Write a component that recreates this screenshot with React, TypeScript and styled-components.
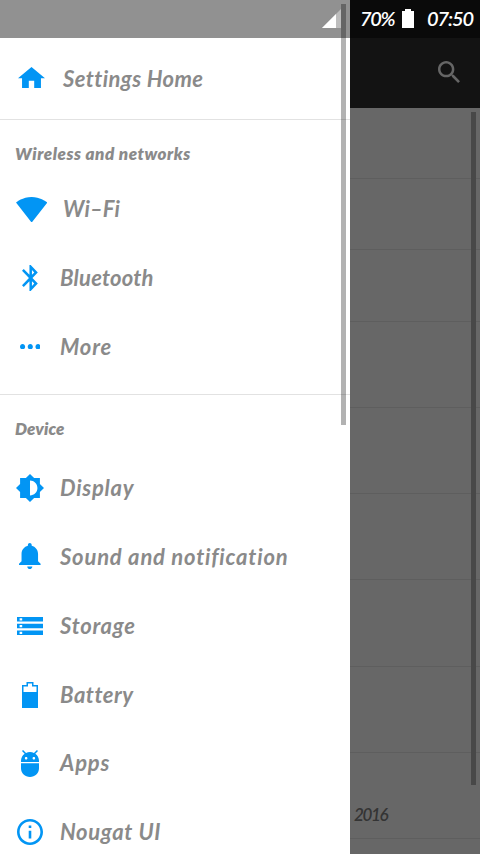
import React from 'react';
import styled, { createGlobalStyle } from 'styled-components';

const GlobalStyle = createGlobalStyle`
  * { box-sizing: border-box; }
  body { margin: 0; background: #676767; font-family: Lato, "Open Sans", sans-serif; font-style: italic; }
`;

const Screen = styled.div`
  position: relative;
  width: 480px;
  height: 854px;
  overflow: hidden;
  background: #676767;
`;

const Page = styled.div`
  display: flex;
  flex-direction: column;
  height: 100%;
`;

const StatusBar = styled.header`
  display: flex;
  align-items: center;
  justify-content: flex-end;
  flex: none;
  height: 38px;
  padding: 0 6px 2px 0;
  background: #0a0a0a;
`;

const StatusText = styled.span<{ $width: number; $spacing: number }>`
  width: ${(p) => p.$width}px;
  color: #fff;
  font-size: 20px;
  font-weight: 600;
  line-height: 36px;
  letter-spacing: ${(p) => p.$spacing}px;
  white-space: nowrap;
`;

const BatteryLevel = styled.svg`
  margin: 0 13px 0 6px;
`;

const Toolbar = styled.div`
  display: flex;
  flex: none;
  align-items: center;
  justify-content: flex-end;
  height: 70px;
  padding: 0 20px 2px 0;
  background: #131313;
`;

const ListItem = styled.div<{ $height: number }>`
  display: flex;
  flex: none;
  align-items: center;
  height: ${(p) => p.$height}px;
  padding: 38px 0 0 354px;
  border-bottom: 1px solid #5e5e5e;
  color: #343434;
  font-size: 17px;
  font-weight: 600;
  letter-spacing: -1.4px;
`;

const Drawer = styled.aside`
  position: absolute;
  top: 0;
  left: 0;
  display: flex;
  flex-direction: column;
  width: 350px;
  height: 854px;
  overflow: hidden;
  background: #fff;
`;

const DrawerStatus = styled.div`
  display: flex;
  flex: none;
  justify-content: flex-end;
  height: 38px;
  padding: 9px 9px 0 0;
  background: #919191;
`;

const Section = styled.section<{ $height?: number }>`
  flex: none;
  height: ${(p) => (p.$height ? `${p.$height}px` : 'auto')};
  border-bottom: 1px solid #e2e2e2;
`;

const Heading = styled.h2<{ $height: number; $spacing: number }>`
  height: ${(p) => p.$height}px;
  margin: 0;
  padding: 23px 0 0 15px;
  color: #8a8a8a;
  font-size: 17px;
  font-weight: 800;
  line-height: 22px;
  letter-spacing: ${(p) => p.$spacing}px;
`;

const Row = styled.div<{ $height?: number }>`
  display: flex;
  align-items: center;
  height: ${(p) => p.$height ?? 68.7}px;
`;

const IconSlot = styled.span<{ $width: number }>`
  display: flex;
  flex: none;
  align-items: center;
  justify-content: center;
  width: ${(p) => p.$width}px;
`;

const Glyph = styled.svg<{ $shift?: number }>`
  display: block;
  fill: #0295f4;
  transform: translateY(${(p) => p.$shift ?? 0}px);
`;

const Label = styled.span<{ $spacing: number }>`
  color: #8a8a8a;
  font-size: 22px;
  font-weight: 700;
  line-height: 28px;
  letter-spacing: ${(p) => p.$spacing}px;
  white-space: nowrap;
`;

const ScrollThumb = styled.i<{ $left: number; $top: number; $height: number; $color: string }>`
  position: absolute;
  top: ${(p) => p.$top}px;
  left: ${(p) => p.$left}px;
  width: 5px;
  height: ${(p) => p.$height}px;
  background: ${(p) => p.$color};
`;

type Icon = { w: number; h: number; box: string; d: string; shift?: number };

const icons: Record<string, Icon> = {
  home: { w: 27, h: 21.3, box: '2 3 20 17', d: 'M10 20v-6h4v6h5v-8h3L12 3 2 12h3v8z', shift: -1 },
  wifi: { w: 31.3, h: 25.6, box: '.36 3 23.28 18.5', d: 'M12.01 21.49L23.64 7c-.45-.34-4.93-4-11.64-4C5.28 3 .81 6.66.36 7l11.63 14.49.01.01.01-.01z' },
  bluetooth: { w: 15.8, h: 26, box: '5 2 12.71 20', d: 'M17.71 7.71L12 2h-1v7.59L6.41 5 5 6.41 10.59 12 5 17.59 6.41 19 11 14.41V22h1l5.71-5.71-4.3-4.29 4.3-4.29zM13 5.83l1.88 1.88L13 9.59V5.83zm1.88 10.46L13 18.17v-3.76l1.88 1.88z' },
  more: { w: 20.6, h: 5.4, box: '4 10 16 4', d: 'M6 10c-1.1 0-2 .9-2 2s.9 2 2 2 2-.9 2-2-.9-2-2-2zm12 0c-1.1 0-2 .9-2 2s.9 2 2 2 2-.9 2-2-.9-2-2-2zm-6 0c-1.1 0-2 .9-2 2s.9 2 2 2 2-.9 2-2-.9-2-2-2z' },
  display: { w: 28, h: 28, box: '.69 .69 22.62 22.62', d: 'M20 15.31L23.31 12 20 8.69V4h-4.69L12 .69 8.69 4H4v4.69L.69 12 4 15.31V20h4.69L12 23.31 15.31 20H20v-4.69zM12 18V6c3.31 0 6 2.69 6 6s-2.69 6-6 6z' },
  sound: { w: 21.6, h: 26, box: '3 2 17 20', shift: -1, d: 'M11.5 22c1.1 0 2-.9 2-2h-4c0 1.1.9 2 2 2zm6.5-6v-5.5c0-3.07-2.13-5.64-5-6.32V3.5c0-.83-.67-1.5-1.5-1.5S10 2.67 10 3.5v.68c-2.87.68-5 3.25-5 6.32V16l-2 2v1h17v-1l-2-2z' },
  storage: { w: 26, h: 18, box: '2 4 20 16', d: 'M2 20h20v-4H2v4zm2-3h2v2H4v-2zM2 4v4h20V4H2zm4 3H4V5h2v2zm-4 7h20v-4H2v4zm2-3h2v2H4v-2z' },
  battery: { w: 16, h: 26, box: '0 0 16 26', d: 'M0 3h4.5V0h7v3H16v23H0zM1.5 4.5V10h13V4.5H10v-3H6v3z' },
  apps: { w: 18, h: 27, box: '5 1.44 14 21.56', d: 'M5 16c0 3.87 3.13 7 7 7s7-3.13 7-7v-4H5v4zM16.12 4.37l2.1-2.1-.82-.83-2.3 2.31C14.16 3.28 13.12 3 12 3s-2.16.28-3.09.75L6.6 1.44l-.82.83 2.1 2.1C6.14 5.64 5 7.68 5 10v1h14v-1c0-2.32-1.14-4.36-2.88-5.63zM9 9c-.55 0-1-.45-1-1s.45-1 1-1 1 .45 1 1-.45 1-1 1zm6 0c-.55 0-1-.45-1-1s.45-1 1-1 1 .45 1 1-.45 1-1 1z' },
  info: { w: 26, h: 26, box: '2 2 20 20', d: 'M11 17h2v-6h-2v6zm1-15C6.48 2 2 6.48 2 12s4.48 10 10 10 10-4.48 10-10S17.52 2 12 2zm0 18c-4.41 0-8-3.59-8-8s3.59-8 8-8 8 3.59 8 8-3.59 8-8 8zM11 9h2V7h-2v2z' },
};

type ItemProps = { icon: string; text: string; spacing: number; slot?: number; height?: number };

function Item({ icon, text, spacing, slot = 60, height }: ItemProps) {
  const { w, h, box, d, shift } = icons[icon];
  return (
    <Row $height={height}>
      <IconSlot $width={slot}>
        <Glyph width={w} height={h} viewBox={box} preserveAspectRatio="none" $shift={shift}>
          <path d={d} fillRule="evenodd" />
        </Glyph>
      </IconSlot>
      <Label $spacing={spacing}>{text}</Label>
    </Row>
  );
}

const rowHeights = [71, 71, 72, 86, 86, 86, 87, 86];

export default function App() {
  return (
    <Screen>
      <GlobalStyle />
      <Page>
        <StatusBar>
          <StatusText $width={36} $spacing={-1.4}>70%</StatusText>
          <BatteryLevel width="12" height="19" viewBox="0 0 12 19" fill="#fff">
            <path d="M0 2h3V0h6v2h3v17H0z" />
          </BatteryLevel>
          <StatusText $width={47} $spacing={-1.1}>07:50</StatusText>
        </StatusBar>
        <Toolbar>
          <svg width="22" height="22" viewBox="3 3 17.49 17.49" fill="#666">
            <path d="M15.5 14h-.79l-.28-.27C15.41 12.59 16 11.11 16 9.5 16 5.91 13.09 3 9.5 3S3 5.91 3 9.5 5.91 16 9.5 16c1.61 0 3.09-.59 4.23-1.57l.27.28v.79l5 4.99L20.49 19l-4.99-5zm-6 0C7.01 14 5 11.99 5 9.5S7.01 5 9.5 5 14 7.01 14 9.5 11.99 14 9.5 14z" />
          </svg>
        </Toolbar>
        {rowHeights.map((h, i) => (
          <ListItem key={i} $height={h} />
        ))}
        <ListItem $height={86}>2016</ListItem>
      </Page>
      <ScrollThumb $left={471} $top={112} $height={673} $color="#484848" />

      <Drawer>
        <DrawerStatus>
          <svg width="19" height="19" viewBox="0 0 19 19">
            <path d="M19 0v19H0z" fill="#bdbdbd" />
            <path d="M14 5v14H0z" fill="#fff" />
          </svg>
        </DrawerStatus>
        <Section $height={82}>
          <Item icon="home" text="Settings Home" spacing={0.4} slot={63} height={81} />
        </Section>
        <Section $height={275}>
          <Heading $height={55} $spacing={0.53}>Wireless and networks</Heading>
          <Item icon="wifi" text="Wi–Fi" spacing={0.1} slot={63} />
          <Item icon="bluetooth" text="Bluetooth" spacing={0.22} />
          <Item icon="more" text="More" spacing={0.8} />
        </Section>
        <Section>
          <Heading $height={59.1} $spacing={0.05}>Device</Heading>
          <Item icon="display" text="Display" spacing={0.75} />
          <Item icon="sound" text="Sound and notification" spacing={0.8} />
          <Item icon="storage" text="Storage" spacing={0.75} />
          <Item icon="battery" text="Battery" spacing={0.5} />
          <Item icon="apps" text="Apps" spacing={0.85} />
          <Item icon="info" text="Nougat UI" spacing={0.65} />
        </Section>
        <ScrollThumb $left={341} $top={4} $height={421} $color="rgba(0, 0, 0, 0.3)" />
      </Drawer>
    </Screen>
  );
}
